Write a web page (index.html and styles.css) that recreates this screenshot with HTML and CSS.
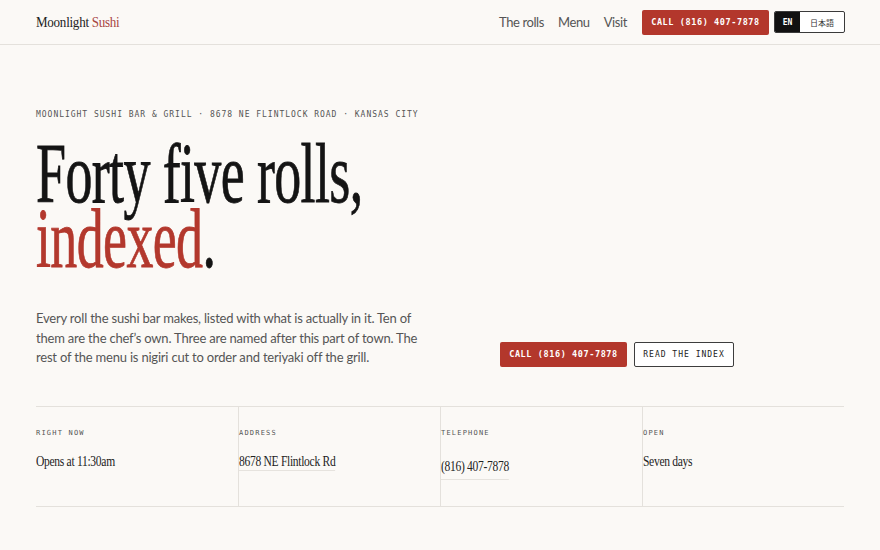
FILE: index.html
```html
<!DOCTYPE html>
<html lang="en">
<head>
<meta charset="utf-8">
<title>Moonlight Sushi</title>
<link rel="stylesheet" href="styles.css">
</head>
<body>
<header class="topbar">
  <div class="logo">Moonlight <span class="accent">Sushi</span></div>
  <nav class="nav">
    <a class="nav-link" href="#">The rolls</a>
    <a class="nav-link" href="#">Menu</a>
    <a class="nav-link" href="#">Visit</a>
    <a class="btn btn-red btn-nav" href="#">CALL (816) 407-7878</a>
    <div class="lang">
      <span class="lang-opt lang-on">EN</span>
      <span class="lang-opt">日本語</span>
    </div>
  </nav>
</header>
<main class="page">
  <section class="hero">
    <p class="eyebrow">MOONLIGHT SUSHI BAR &amp; GRILL · 8678 NE FLINTLOCK ROAD · KANSAS CITY</p>
    <h1 class="title"><span class="title-line">Forty five rolls,</span><span class="title-line"><span class="accent">indexed</span>.</span></h1>
    <div class="intro">
      <p class="lede">Every roll the sushi bar makes, listed with what is actually in it. Ten of them are the chef’s own. Three are named after this part of town. The rest of the menu is nigiri cut to order and teriyaki off the grill.</p>
      <div class="actions">
        <a class="btn btn-red btn-hero" href="#">CALL (816) 407-7878</a>
        <a class="btn btn-outline btn-hero" href="#">READ THE INDEX</a>
      </div>
    </div>
  </section>
  <section class="facts">
    <div class="fact">
      <div class="fact-label">RIGHT NOW</div>
      <div class="fact-value">Opens at 11:30am</div>
    </div>
    <div class="fact">
      <div class="fact-label">ADDRESS</div>
      <a class="fact-value fact-link" href="#">8678 NE Flintlock Rd</a>
    </div>
    <div class="fact">
      <div class="fact-label">TELEPHONE</div>
      <a class="fact-value fact-link fact-tel" href="#">(816) 407-7878</a>
    </div>
    <div class="fact">
      <div class="fact-label">OPEN</div>
      <div class="fact-value">Seven days</div>
    </div>
  </section>
</main>
</body>
</html>
```
FILE: styles.css
```css
* { box-sizing: border-box; }
html, body { margin: 0; padding: 0; }
body {
  background: #fbf9f6;
  color: #1a1a1a;
  font-family: "Lato", "Liberation Sans", sans-serif;
  width: 880px;
  height: 550px;
  overflow: hidden;
}
a { text-decoration: none; color: inherit; }
.accent { color: #b3382d; }

.topbar {
  height: 45px;
  border-bottom: 1px solid #e4e1dc;
  display: flex;
  align-items: center;
  justify-content: space-between;
  padding: 0 35px 0 36px;
}
.logo {
  font-family: "Liberation Serif", serif;
  font-size: 15px;
  letter-spacing: -0.3px;
  color: #222;
  transform: scaleX(0.87);
  transform-origin: left center;
  margin-top: 1px;
}
.logo .accent { color: #a8453f; }
.nav { display: flex; align-items: center; }
.nav-link {
  font-size: 13px;
  letter-spacing: -0.4px;
  color: #555;
  margin-right: 14px;
}
.nav-link:nth-child(3) { margin-right: 15px; }
.btn {
  display: inline-flex;
  align-items: center;
  justify-content: center;
  font-family: "DejaVu Sans Mono", "Liberation Mono", monospace;
  font-size: 8.5px;
  letter-spacing: 0.6px;
  border-radius: 2px;
}
.btn-red {
  background: #b3372c;
  color: #fff;
  font-weight: bold;
}
.btn-nav { width: 127px; height: 25px; margin-right: 5px; }
.lang {
  display: flex;
  border: 1px solid #3a3a3a;
  border-radius: 2px;
  height: 22px;
  overflow: hidden;
  background: #fff;
}
.lang-opt {
  display: flex;
  align-items: center;
  justify-content: center;
  font-size: 8px;
  color: #333;
  width: 44px;
  font-family: "Noto Sans CJK JP", sans-serif;
}
.lang-on {
  width: 25px;
  background: #111;
  color: #fff;
  font-family: "DejaVu Sans Mono", monospace;
  font-weight: bold;
}

.page { padding: 0 36px 0 36px; }
.hero { padding-top: 65px; }
.eyebrow {
  margin: 0;
  font-family: "DejaVu Sans Mono", "Liberation Mono", monospace;
  font-size: 8px;
  letter-spacing: 0.98px;
  color: #555;
}
.title {
  margin: 22px 0 0;
  font-family: "Liberation Serif", serif;
  font-weight: normal;
  font-size: 85px;
  line-height: 65px;
  letter-spacing: -1px;
  color: #141414;
  -webkit-text-stroke: 0.8px currentColor;
  display: flex;
  flex-direction: column;
  transform: scaleX(0.635);
  transform-origin: left top;
}
.title-line { white-space: nowrap; height: 65px; }
.title .accent { display: inline-block; }

.intro {
  margin-top: 38px;
  display: grid;
  grid-template-columns: 388px 1fr;
  column-gap: 76px;
  align-items: end;
}
.lede {
  margin: 0;
  font-size: 13px;
  letter-spacing: -0.2px;
  line-height: 19.5px;
  color: #555;
}
.actions { display: flex; gap: 7px; margin-bottom: 1px; }
.btn-hero { height: 25px; }
.btn-red.btn-hero { width: 127px; }
.btn-outline {
  width: 100px;
  border: 1px solid #3d3d3d;
  color: #222;
  background: #fff;
  font-size: 8px;
  letter-spacing: 1px;
}

.facts {
  margin-top: 38px;
  border-top: 1px solid #e4e1dc;
  border-bottom: 1px solid #e4e1dc;
  display: grid;
  grid-template-columns: repeat(4, 1fr);
  height: 101px;
}
.fact {
  padding: 22px 0 0 0;
  border-left: 1px solid #e4e1dc;
  display: flex;
  flex-direction: column;
  align-items: flex-start;
}
.fact:first-child { border-left: none; }
.fact-label {
  font-family: "DejaVu Sans Mono", "Liberation Mono", monospace;
  font-size: 7px;
  letter-spacing: 1.2px;
  color: #555;
}
.fact-value {
  margin-top: 15px;
  font-family: "Liberation Serif", serif;
  font-size: 15.5px;
  color: #222;
  letter-spacing: -0.4px;
  transform: scaleX(0.745);
  transform-origin: left center;
}
.fact-link {
  border-bottom: 1px solid #e6e3de;
  padding-bottom: 0;
}
.fact-tel { margin-top: 20px; padding-bottom: 4px; }
```
